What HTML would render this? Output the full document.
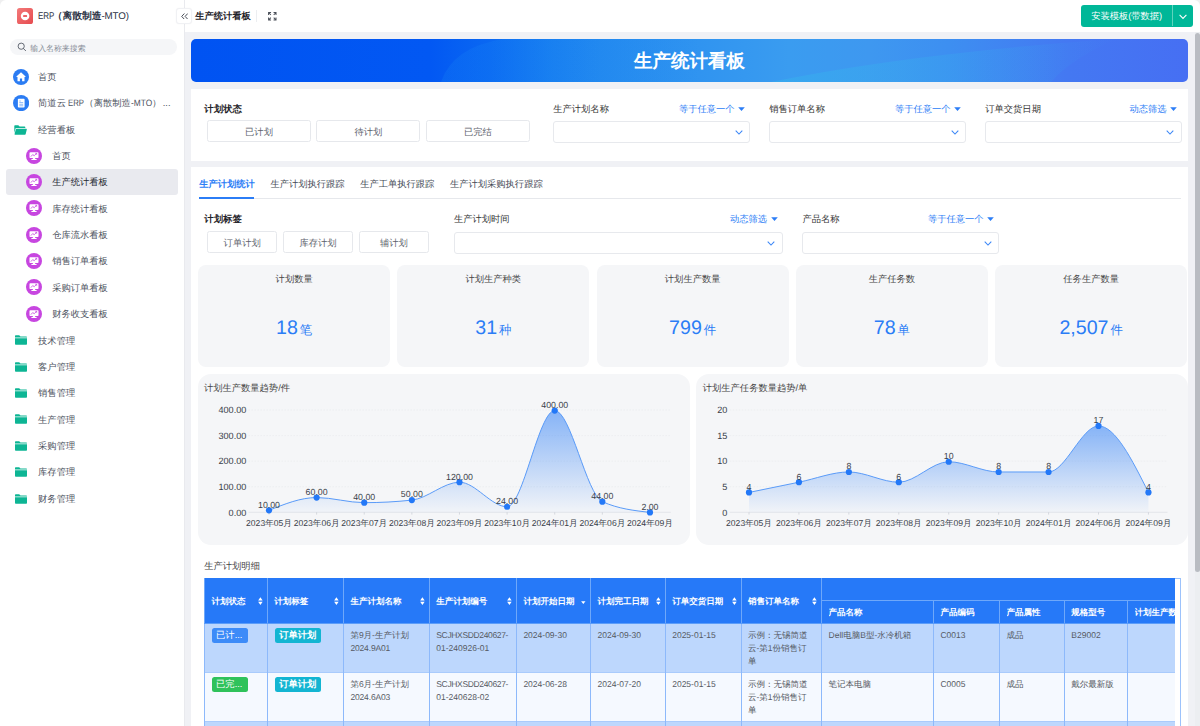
<!DOCTYPE html>
<html lang="zh"><head><meta charset="utf-8"><title>生产统计看板</title><style>
*{box-sizing:border-box;margin:0;padding:0}
html,body{width:1200px;height:726px;overflow:hidden;background:#fff}
body{position:relative;font-family:"Liberation Sans",sans-serif;font-size:9.28px;letter-spacing:0;text-rendering:geometricPrecision;color:#333;-webkit-font-smoothing:antialiased}
.abs{position:absolute}
.t{position:absolute;white-space:nowrap;line-height:12px}
#side{position:absolute;left:0;top:0;width:184px;height:726px;background:#fff;border-right:1px solid #e9eaee;width:185px}
#main{position:absolute;left:185px;top:32px;width:1015px;height:694px;background:#f0f1f5}
.mi{position:absolute;left:0;width:184px;height:26px}
.mi .tx{position:absolute;top:50%;transform:translateY(-50%);font-size:9.3px;color:#4c5260;white-space:nowrap;line-height:12px}
.mi svg{position:absolute}
.sel{position:absolute;left:6px;width:172px;height:25.6px;background:#e9eaef;border-radius:3px}
.panel{position:absolute;background:#fff}
.btn{position:absolute;border:1px solid #e6e8ec;border-radius:2.5px;background:#fff;text-align:center;color:#5c626c;font-size:9.28px}
.selbox{position:absolute;border:1px solid #e7e9ed;border-radius:3px;background:#fff}
.lbl{position:absolute;white-space:nowrap;font-size:9.28px;line-height:12px;color:#333}
.lblb{font-weight:bold;color:#1f2329;font-size:9.4px}
.blue{color:#2b7df6}
.card{position:absolute;background:#f5f6f8;border-radius:8px}
.card .cl{position:absolute;left:0;right:0;top:8.2px;text-align:center;font-size:9.28px;line-height:12px;color:#444}
.card .cv{position:absolute;left:0;right:0;top:49.6px;text-align:center;color:#2b7df6;font-size:19.6px;letter-spacing:0;line-height:26px;white-space:nowrap}
.card .cv span{font-size:12.4px;margin-left:2px}
.nr{letter-spacing:-.35px}
.chart{position:absolute;background:#f5f6f8;border-radius:13px}
</style></head>
<body>
<div id="main"></div>
<div id="side">
<svg class="abs" style="left:17px;top:7.7px" width="16" height="16" viewBox="0 0 16 16"><defs><linearGradient id="lg" x1="0" y1="0" x2="1" y2="1"><stop offset="0" stop-color="#f37a7a"/><stop offset="1" stop-color="#e64b4f"/></linearGradient></defs><rect width="16" height="16" rx="2.6" fill="url(#lg)"/><circle cx="8.1" cy="8" r="4.3" fill="#fff"/><rect x="6.1" y="7.1" width="4" height="1.9" rx="0.6" fill="#ec6466"/></svg>
<div class="t" style="left:38.4px;top:11.4px;font-size:9.75px;letter-spacing:0;color:#2b3245"><span style="display:inline-block;transform:scaleX(.82);transform-origin:0 50%;margin-right:-3.6px">ERP</span><b style="margin-left:-2.2px">（离散制造</b><span style="letter-spacing:-0.1px">-MTO)</span></div>
<div class="abs" style="left:10px;top:39px;width:166.5px;height:15.8px;border-radius:8px;background:#f5f6f8"></div>
<svg class="abs" style="left:17.2px;top:42.3px" width="10" height="10" viewBox="0 0 10 10"><circle cx="4.2" cy="4.2" r="3.1" fill="none" stroke="#555b66" stroke-width="0.9"/><path d="M6.5 6.6 L8.6 8.7" stroke="#555b66" stroke-width="0.9" stroke-linecap="round"/></svg>
<div class="t" style="left:30.3px;top:42.5px;font-size:7.9px;letter-spacing:0;color:#868c97">输入名称来搜索</div>
<svg class="abs" style="left:13px;top:68.5px" width="16" height="16" viewBox="0 0 16 16"><circle cx="8" cy="8" r="8" fill="#2b7cf3"/><path d="M8 3.3 L3.4 7.6 Q3.2 8 3.7 8 H4.5 V11.9 Q4.5 12.3 4.9 12.3 H6.9 V9.5 H9.1 V12.3 H11.1 Q11.5 12.3 11.5 11.9 V8 H12.3 Q12.8 8 12.6 7.6 Z" fill="#fff"/></svg>
<div class="t" style="left:38.1px;top:70.9px;color:#4c5260">首页</div>
<svg class="abs" style="left:12.9px;top:94.76px" width="16.2" height="16.2" viewBox="0 0 16.2 16.2"><circle cx="8.1" cy="8.1" r="8.1" fill="#2b7cf3"/><rect x="4.9" y="3.8" width="6.7" height="8.7" rx="0.8" fill="#fff"/><rect x="6.3" y="5.6" width="1.5" height="0.85" fill="#7fb0f8"/><rect x="6.3" y="7.2" width="3.9" height="0.85" fill="#7fb0f8"/><rect x="6.3" y="8.8" width="3.9" height="0.85" fill="#7fb0f8"/><rect x="6.3" y="10.4" width="3.9" height="0.85" fill="#7fb0f8"/></svg>
<div class="t" style="left:38.1px;top:97.3px;color:#4c5260">简道云 <span style="display:inline-block;transform:scaleX(.84);transform-origin:0 50%;margin-right:-3px">ERP</span>（离散制造<span style="display:inline-block;transform:scaleX(.9);transform-origin:0 50%;margin-right:-2.4px">-MTO</span>）<span style="margin-left:1.5px">...</span></div>
<svg class="abs" style="left:14.399999999999999px;top:124.62px" width="13" height="10" viewBox="0 0 13 10"><path d="M0.3 0.9 Q0.3 0.2 1 0.2 H4.3 L5.6 1.5 H10.6 Q11.3 1.5 11.3 2.2 V3 H2.4 Q1.6 3 1.4 3.8 L0.3 8.2 Z" fill="#0db594"/><path d="M2.6 3.7 H12.3 Q13 3.7 12.8 4.4 L11.7 9.1 Q11.6 9.7 10.9 9.7 H0.9 Q0.4 9.7 0.6 9.1 L1.8 4.3 Q2 3.7 2.6 3.7 Z" fill="#0db594"/></svg>
<div class="t" style="left:38.1px;top:123.6px;color:#4c5260">经营看板</div>
<svg class="abs" style="left:26.200000000000003px;top:147.57999999999998px" width="16" height="16" viewBox="0 0 16 16"><circle cx="8" cy="8" r="8" fill="#c746e0"/><rect x="3.5" y="4.3" width="9" height="5.8" rx="0.8" fill="#fff"/><path d="M7 10 H9 L9.3 11 H10.6 V12 H5.4 V11 H6.7 Z" fill="#fff"/><path d="M4.9 8.6 L6.7 6.6 L8.2 7.7 L10.6 5.4 M9.3 5.3 H10.7 V6.7" stroke="#c746e0" stroke-width="0.8" fill="none"/></svg>
<div class="t" style="left:52.2px;top:150.0px;color:#4c5260">首页</div>
<div class="sel" style="top:169.0px"></div>
<svg class="abs" style="left:26.200000000000003px;top:173.94px" width="16" height="16" viewBox="0 0 16 16"><circle cx="8" cy="8" r="8" fill="#c746e0"/><rect x="3.5" y="4.3" width="9" height="5.8" rx="0.8" fill="#fff"/><path d="M7 10 H9 L9.3 11 H10.6 V12 H5.4 V11 H6.7 Z" fill="#fff"/><path d="M4.9 8.6 L6.7 6.6 L8.2 7.7 L10.6 5.4 M9.3 5.3 H10.7 V6.7" stroke="#c746e0" stroke-width="0.8" fill="none"/></svg>
<div class="t" style="left:52.2px;top:176.3px;color:#23272f">生产统计看板</div>
<svg class="abs" style="left:26.200000000000003px;top:200.3px" width="16" height="16" viewBox="0 0 16 16"><circle cx="8" cy="8" r="8" fill="#c746e0"/><rect x="3.5" y="4.3" width="9" height="5.8" rx="0.8" fill="#fff"/><path d="M7 10 H9 L9.3 11 H10.6 V12 H5.4 V11 H6.7 Z" fill="#fff"/><path d="M4.9 8.6 L6.7 6.6 L8.2 7.7 L10.6 5.4 M9.3 5.3 H10.7 V6.7" stroke="#c746e0" stroke-width="0.8" fill="none"/></svg>
<div class="t" style="left:52.2px;top:202.7px;color:#4c5260">库存统计看板</div>
<svg class="abs" style="left:26.200000000000003px;top:226.66px" width="16" height="16" viewBox="0 0 16 16"><circle cx="8" cy="8" r="8" fill="#c746e0"/><rect x="3.5" y="4.3" width="9" height="5.8" rx="0.8" fill="#fff"/><path d="M7 10 H9 L9.3 11 H10.6 V12 H5.4 V11 H6.7 Z" fill="#fff"/><path d="M4.9 8.6 L6.7 6.6 L8.2 7.7 L10.6 5.4 M9.3 5.3 H10.7 V6.7" stroke="#c746e0" stroke-width="0.8" fill="none"/></svg>
<div class="t" style="left:52.2px;top:229.1px;color:#4c5260">仓库流水看板</div>
<svg class="abs" style="left:26.200000000000003px;top:253.01999999999998px" width="16" height="16" viewBox="0 0 16 16"><circle cx="8" cy="8" r="8" fill="#c746e0"/><rect x="3.5" y="4.3" width="9" height="5.8" rx="0.8" fill="#fff"/><path d="M7 10 H9 L9.3 11 H10.6 V12 H5.4 V11 H6.7 Z" fill="#fff"/><path d="M4.9 8.6 L6.7 6.6 L8.2 7.7 L10.6 5.4 M9.3 5.3 H10.7 V6.7" stroke="#c746e0" stroke-width="0.8" fill="none"/></svg>
<div class="t" style="left:52.2px;top:255.4px;color:#4c5260">销售订单看板</div>
<svg class="abs" style="left:26.200000000000003px;top:279.38px" width="16" height="16" viewBox="0 0 16 16"><circle cx="8" cy="8" r="8" fill="#c746e0"/><rect x="3.5" y="4.3" width="9" height="5.8" rx="0.8" fill="#fff"/><path d="M7 10 H9 L9.3 11 H10.6 V12 H5.4 V11 H6.7 Z" fill="#fff"/><path d="M4.9 8.6 L6.7 6.6 L8.2 7.7 L10.6 5.4 M9.3 5.3 H10.7 V6.7" stroke="#c746e0" stroke-width="0.8" fill="none"/></svg>
<div class="t" style="left:52.2px;top:281.8px;color:#4c5260">采购订单看板</div>
<svg class="abs" style="left:26.200000000000003px;top:305.74px" width="16" height="16" viewBox="0 0 16 16"><circle cx="8" cy="8" r="8" fill="#c746e0"/><rect x="3.5" y="4.3" width="9" height="5.8" rx="0.8" fill="#fff"/><path d="M7 10 H9 L9.3 11 H10.6 V12 H5.4 V11 H6.7 Z" fill="#fff"/><path d="M4.9 8.6 L6.7 6.6 L8.2 7.7 L10.6 5.4 M9.3 5.3 H10.7 V6.7" stroke="#c746e0" stroke-width="0.8" fill="none"/></svg>
<div class="t" style="left:52.2px;top:308.1px;color:#4c5260">财务收支看板</div>
<svg class="abs" style="left:15px;top:335.40000000000003px" width="12" height="10" viewBox="0 0 12 10"><path d="M0 0.9 Q0 0.2 0.7 0.2 H4.2 L5.5 1.5 H11.3 Q12 1.5 12 2.2 V2.6 H0 Z" fill="#0db594"/><path d="M0 3.3 H12 V9 Q12 9.8 11.2 9.8 H0.8 Q0 9.8 0 9 Z" fill="#0db594"/></svg>
<div class="t" style="left:38.1px;top:334.5px;color:#4c5260">技术管理</div>
<svg class="abs" style="left:15px;top:361.76px" width="12" height="10" viewBox="0 0 12 10"><path d="M0 0.9 Q0 0.2 0.7 0.2 H4.2 L5.5 1.5 H11.3 Q12 1.5 12 2.2 V2.6 H0 Z" fill="#0db594"/><path d="M0 3.3 H12 V9 Q12 9.8 11.2 9.8 H0.8 Q0 9.8 0 9 Z" fill="#0db594"/></svg>
<div class="t" style="left:38.1px;top:360.9px;color:#4c5260">客户管理</div>
<svg class="abs" style="left:15px;top:388.12px" width="12" height="10" viewBox="0 0 12 10"><path d="M0 0.9 Q0 0.2 0.7 0.2 H4.2 L5.5 1.5 H11.3 Q12 1.5 12 2.2 V2.6 H0 Z" fill="#0db594"/><path d="M0 3.3 H12 V9 Q12 9.8 11.2 9.8 H0.8 Q0 9.8 0 9 Z" fill="#0db594"/></svg>
<div class="t" style="left:38.1px;top:387.2px;color:#4c5260">销售管理</div>
<svg class="abs" style="left:15px;top:414.48px" width="12" height="10" viewBox="0 0 12 10"><path d="M0 0.9 Q0 0.2 0.7 0.2 H4.2 L5.5 1.5 H11.3 Q12 1.5 12 2.2 V2.6 H0 Z" fill="#0db594"/><path d="M0 3.3 H12 V9 Q12 9.8 11.2 9.8 H0.8 Q0 9.8 0 9 Z" fill="#0db594"/></svg>
<div class="t" style="left:38.1px;top:413.6px;color:#4c5260">生产管理</div>
<svg class="abs" style="left:15px;top:440.84px" width="12" height="10" viewBox="0 0 12 10"><path d="M0 0.9 Q0 0.2 0.7 0.2 H4.2 L5.5 1.5 H11.3 Q12 1.5 12 2.2 V2.6 H0 Z" fill="#0db594"/><path d="M0 3.3 H12 V9 Q12 9.8 11.2 9.8 H0.8 Q0 9.8 0 9 Z" fill="#0db594"/></svg>
<div class="t" style="left:38.1px;top:439.9px;color:#4c5260">采购管理</div>
<svg class="abs" style="left:15px;top:467.2px" width="12" height="10" viewBox="0 0 12 10"><path d="M0 0.9 Q0 0.2 0.7 0.2 H4.2 L5.5 1.5 H11.3 Q12 1.5 12 2.2 V2.6 H0 Z" fill="#0db594"/><path d="M0 3.3 H12 V9 Q12 9.8 11.2 9.8 H0.8 Q0 9.8 0 9 Z" fill="#0db594"/></svg>
<div class="t" style="left:38.1px;top:466.3px;color:#4c5260">库存管理</div>
<svg class="abs" style="left:15px;top:493.56px" width="12" height="10" viewBox="0 0 12 10"><path d="M0 0.9 Q0 0.2 0.7 0.2 H4.2 L5.5 1.5 H11.3 Q12 1.5 12 2.2 V2.6 H0 Z" fill="#0db594"/><path d="M0 3.3 H12 V9 Q12 9.8 11.2 9.8 H0.8 Q0 9.8 0 9 Z" fill="#0db594"/></svg>
<div class="t" style="left:38.1px;top:492.7px;color:#4c5260">财务管理</div>
</div>
<div class="abs" style="left:0;top:0;width:6px;height:6px;background:#efeff0"><div style="width:6px;height:6px;background:#fff;border-top-left-radius:6px"></div></div>
<div class="abs" style="left:1194px;top:0;width:6px;height:6px;background:#efeff0"><div style="width:6px;height:6px;background:#fff;border-top-right-radius:6px"></div></div>
<div class="abs" style="left:176px;top:7.8px;width:15.6px;height:15.8px;background:#fff;border:1px solid #f0f1f4;border-radius:3px;box-shadow:0 0 1.5px rgba(0,0,0,.05)"></div>
<svg class="abs" style="left:180.6px;top:12.6px" width="7.4" height="6.8" viewBox="0 0 7.4 6.8"><path d="M3.4 0.5 L0.7 3.4 L3.4 6.3 M6.8 0.5 L4.1 3.4 L6.8 6.3" fill="none" stroke="#3f444e" stroke-width="0.95"/></svg>
<div class="t" style="left:195.2px;top:10.3px;font-weight:bold;color:#1f2329">生产统计看板</div>
<div class="abs" style="left:256px;top:9.5px;width:1px;height:12.5px;background:#eceef1"></div>
<svg class="abs" style="left:268px;top:12px" width="8.6" height="8.6" viewBox="0 0 9 9"><g fill="none" stroke="#4a4f59" stroke-width="1.05"><path d="M0.6 3.2 V0.6 H3.2 M0.8 0.8 L3 3"/><path d="M5.8 0.6 H8.4 V3.2 M8.2 0.8 L6 3"/><path d="M0.6 5.8 V8.4 H3.2 M0.8 8.2 L3 6"/><path d="M5.8 8.4 H8.4 V5.8 M8.2 8.2 L6 6"/></g></svg>
<div class="abs" style="left:1080.7px;top:5.4px;width:112.7px;height:21.2px;background:#00b798;border-radius:3px"></div>
<div class="abs" style="left:1172.4px;top:5.2px;width:0.8px;height:21.3px;background:#5fd3bd"></div>
<div class="t" style="left:1080.7px;top:10.4px;width:92px;text-align:center;color:#fff">安装模板(带数据)</div>
<svg class="abs" style="left:1178.9px;top:13.9px" width="8" height="6" viewBox="0 0 8 6"><path d="M0.6 0.9 L4 4.5 L7.4 0.9" fill="none" stroke="#fff" stroke-width="1.1"/></svg>
<div class="abs" style="left:1195px;top:32px;width:5px;height:694px;background:#eceef1"></div>
<div class="abs" style="left:1195px;top:32.5px;width:5px;height:539px;background:#b9bcc2;border-radius:2.5px"></div>
<div class="abs" style="left:191px;top:39px;width:997px;height:43px;border-radius:5px;overflow:hidden;background:linear-gradient(90deg,#0053f2 0%,#0258f3 24%,#0a68f2 30%,#187ef0 36%,#2389ef 41%,#3094f0 51%,#3a9cf0 60%,#3e98f0 68%,#3d8ff1 76%,#4478f2 88%,#466ff3 100%)">
<svg width="997" height="43" viewBox="0 0 997 43" style="position:absolute;left:0;top:0"><defs><linearGradient id="bw" x1="0" y1="0" x2="1" y2="0"><stop offset="0" stop-color="#37b0ee" stop-opacity="0.55"/><stop offset="1" stop-color="#37b0ee" stop-opacity="0"/></linearGradient><linearGradient id="bw2" x1="0" y1="0" x2="1" y2="0"><stop offset="0" stop-color="#1a8af5" stop-opacity="0.22"/><stop offset="1" stop-color="#1a8af5" stop-opacity="0"/></linearGradient></defs>
<path d="M250 43 Q262 8 312 0 H520 V43 Z" fill="url(#bw2)"/>
<path d="M580 43 Q720 14 925 0 Q880 20 860 43 Z" fill="url(#bw)"/></svg>
<div style="position:absolute;left:0;right:0;top:10.5px;text-align:center;color:#fff;font-weight:bold;font-size:18.5px;line-height:22px">生产统计看板</div></div>
<div class="panel" style="left:191px;top:89px;width:997px;height:71.8px"></div>
<div class="lbl lblb" style="left:204.3px;top:103px">计划状态</div>
<div class="btn" style="left:207.0px;top:120.3px;width:104px;height:21.4px;line-height:22.2px">已计划</div>
<div class="btn" style="left:316.4px;top:120.3px;width:104px;height:21.4px;line-height:22.2px">待计划</div>
<div class="btn" style="left:425.8px;top:120.3px;width:104px;height:21.4px;line-height:22.2px">已完结</div>
<div class="lbl " style="left:553.3px;top:103px">生产计划名称</div>
<div class="lbl blue" style="right:465.5px;top:103px">等于任意一个</div>
<svg class="abs" style="left:738px;top:107.2px" width="7" height="4.2" viewBox="0 0 7 4.2"><path d="M0.2 0.2 H6.8 L3.5 4 Z" fill="#2b7df6"/></svg>
<div class="selbox" style="left:553px;top:121px;width:197px;height:22px"></div><svg class="abs" style="left:734.7px;top:129.7px" width="8" height="5" viewBox="0 0 8 5"><path d="M0.7 0.7 L4 4 L7.3 0.7" fill="none" stroke="#3a86f7" stroke-width="1.05"/></svg>
<div class="lbl " style="left:769.3px;top:103px">销售订单名称</div>
<div class="lbl blue" style="right:249.5px;top:103px">等于任意一个</div>
<svg class="abs" style="left:954px;top:107.2px" width="7" height="4.2" viewBox="0 0 7 4.2"><path d="M0.2 0.2 H6.8 L3.5 4 Z" fill="#2b7df6"/></svg>
<div class="selbox" style="left:769px;top:121px;width:197px;height:22px"></div><svg class="abs" style="left:950.7px;top:129.7px" width="8" height="5" viewBox="0 0 8 5"><path d="M0.7 0.7 L4 4 L7.3 0.7" fill="none" stroke="#3a86f7" stroke-width="1.05"/></svg>
<div class="lbl " style="left:985.3px;top:103px">订单交货日期</div>
<div class="lbl blue" style="right:33.5px;top:103px">动态筛选</div>
<svg class="abs" style="left:1170px;top:107.2px" width="7" height="4.2" viewBox="0 0 7 4.2"><path d="M0.2 0.2 H6.8 L3.5 4 Z" fill="#2b7df6"/></svg>
<div class="selbox" style="left:985px;top:121px;width:196.5px;height:22px"></div><svg class="abs" style="left:1166.2px;top:129.7px" width="8" height="5" viewBox="0 0 8 5"><path d="M0.7 0.7 L4 4 L7.3 0.7" fill="none" stroke="#3a86f7" stroke-width="1.05"/></svg>
<div class="panel" style="left:191px;top:167.4px;width:997px;height:560px"></div>
<div class="abs" style="left:199px;top:197.8px;width:981.5px;height:1px;background:#e6e8ec"></div>
<div class="abs" style="left:199px;top:196.8px;width:55.4px;height:2px;background:#2b7df6"></div>
<div class="lbl blue" style="left:199.2px;top:177.7px;font-weight:bold">生产计划统计</div>
<div class="lbl" style="left:270.4px;top:177.7px;color:#444a55">生产计划执行跟踪</div>
<div class="lbl" style="left:360.2px;top:177.7px;color:#444a55">生产工单执行跟踪</div>
<div class="lbl" style="left:450px;top:177.7px;color:#444a55">生产计划采购执行跟踪</div>
<div class="lbl lblb" style="left:204.3px;top:213.05px">计划标签</div>
<div class="btn" style="left:207.0px;top:231.2px;width:70.3px;height:21.6px;line-height:22.400000000000002px">订单计划</div>
<div class="btn" style="left:282.9px;top:231.2px;width:70.3px;height:21.6px;line-height:22.400000000000002px">库存计划</div>
<div class="btn" style="left:358.8px;top:231.2px;width:70.3px;height:21.6px;line-height:22.400000000000002px">辅计划</div>
<div class="lbl " style="left:454px;top:213.05px">生产计划时间</div>
<div class="lbl blue" style="right:433px;top:213.05px">动态筛选</div>
<svg class="abs" style="left:770.5px;top:217.3px" width="7" height="4.2" viewBox="0 0 7 4.2"><path d="M0.2 0.2 H6.8 L3.5 4 Z" fill="#2b7df6"/></svg>
<div class="selbox" style="left:453.7px;top:232px;width:329px;height:21.6px"></div><svg class="abs" style="left:767.4000000000001px;top:240.5px" width="8" height="5" viewBox="0 0 8 5"><path d="M0.7 0.7 L4 4 L7.3 0.7" fill="none" stroke="#3a86f7" stroke-width="1.05"/></svg>
<div class="lbl " style="left:802.5px;top:213.05px">产品名称</div>
<div class="lbl blue" style="right:216.5px;top:213.05px">等于任意一个</div>
<svg class="abs" style="left:987px;top:217.3px" width="7" height="4.2" viewBox="0 0 7 4.2"><path d="M0.2 0.2 H6.8 L3.5 4 Z" fill="#2b7df6"/></svg>
<div class="selbox" style="left:802.2px;top:232px;width:197px;height:21.6px"></div><svg class="abs" style="left:983.9000000000001px;top:240.5px" width="8" height="5" viewBox="0 0 8 5"><path d="M0.7 0.7 L4 4 L7.3 0.7" fill="none" stroke="#3a86f7" stroke-width="1.05"/></svg>
<div class="card" style="left:198px;top:265px;width:192.3px;height:101.8px"><div class="cl">计划数量</div><div class="cv">18<span>笔</span></div></div>
<div class="card" style="left:397.2px;top:265px;width:192.3px;height:101.8px"><div class="cl">计划生产种类</div><div class="cv">31<span>种</span></div></div>
<div class="card" style="left:596.5px;top:265px;width:192.3px;height:101.8px"><div class="cl">计划生产数量</div><div class="cv">799<span>件</span></div></div>
<div class="card" style="left:795.7px;top:265px;width:192.3px;height:101.8px"><div class="cl">生产任务数</div><div class="cv">78<span>单</span></div></div>
<div class="card" style="left:995px;top:265px;width:192.3px;height:101.8px"><div class="cl">任务生产数量</div><div class="cv">2,507<span>件</span></div></div>
<div class="chart" style="left:198px;top:373.5px;width:491.5px;height:171.2px"></div>
<div class="lbl" style="left:204px;top:381.7px;color:#444">计划生产数量趋势/件</div>
<svg class="abs" style="left:0;top:0;overflow:visible" width="1200" height="726" viewBox="0 0 1200 726" font-family="Liberation Sans, sans-serif" letter-spacing="0" text-rendering="geometricPrecision">
<defs><linearGradient id="ga" gradientUnits="userSpaceOnUse" x1="0" y1="410.6" x2="0" y2="512.3"><stop offset="0" stop-color="#2b7df6" stop-opacity="0.55"/><stop offset="1" stop-color="#2b7df6" stop-opacity="0.02"/></linearGradient></defs>
<line x1="248.5" x2="670.8" y1="512.3" y2="512.3" stroke="#dfe1e6" stroke-width="0.8"/>
<text x="246.3" y="515.50" text-anchor="end" font-size="9.1" fill="#3a3f4a">0.00</text>
<line x1="248.5" x2="670.8" y1="486.72" y2="486.72" stroke="#e9ebee" stroke-width="0.7" stroke-dasharray="1.5 1.5"/>
<text x="246.3" y="489.92" text-anchor="end" font-size="9.1" fill="#3a3f4a">100.00</text>
<line x1="248.5" x2="670.8" y1="461.15" y2="461.15" stroke="#e9ebee" stroke-width="0.7" stroke-dasharray="1.5 1.5"/>
<text x="246.3" y="464.35" text-anchor="end" font-size="9.1" fill="#3a3f4a">200.00</text>
<line x1="248.5" x2="670.8" y1="435.57" y2="435.57" stroke="#e9ebee" stroke-width="0.7" stroke-dasharray="1.5 1.5"/>
<text x="246.3" y="438.77" text-anchor="end" font-size="9.1" fill="#3a3f4a">300.00</text>
<line x1="248.5" x2="670.8" y1="410.00" y2="410.00" stroke="#e9ebee" stroke-width="0.7" stroke-dasharray="1.5 1.5"/>
<text x="246.3" y="413.20" text-anchor="end" font-size="9.1" fill="#3a3f4a">400.00</text>
<line x1="269.00" x2="269.00" y1="512.3" y2="514.5999999999999" stroke="#c9ccd3" stroke-width="0.7"/>
<text x="269.00" y="525.60" text-anchor="middle" font-size="8.6" fill="#3a3f4a">2023年05月</text>
<line x1="316.62" x2="316.62" y1="512.3" y2="514.5999999999999" stroke="#c9ccd3" stroke-width="0.7"/>
<text x="316.62" y="525.60" text-anchor="middle" font-size="8.6" fill="#3a3f4a">2023年06月</text>
<line x1="364.24" x2="364.24" y1="512.3" y2="514.5999999999999" stroke="#c9ccd3" stroke-width="0.7"/>
<text x="364.24" y="525.60" text-anchor="middle" font-size="8.6" fill="#3a3f4a">2023年07月</text>
<line x1="411.86" x2="411.86" y1="512.3" y2="514.5999999999999" stroke="#c9ccd3" stroke-width="0.7"/>
<text x="411.86" y="525.60" text-anchor="middle" font-size="8.6" fill="#3a3f4a">2023年08月</text>
<line x1="459.48" x2="459.48" y1="512.3" y2="514.5999999999999" stroke="#c9ccd3" stroke-width="0.7"/>
<text x="459.48" y="525.60" text-anchor="middle" font-size="8.6" fill="#3a3f4a">2023年09月</text>
<line x1="507.10" x2="507.10" y1="512.3" y2="514.5999999999999" stroke="#c9ccd3" stroke-width="0.7"/>
<text x="507.10" y="525.60" text-anchor="middle" font-size="8.6" fill="#3a3f4a">2023年10月</text>
<line x1="554.72" x2="554.72" y1="512.3" y2="514.5999999999999" stroke="#c9ccd3" stroke-width="0.7"/>
<text x="554.72" y="525.60" text-anchor="middle" font-size="8.6" fill="#3a3f4a">2024年01月</text>
<line x1="602.34" x2="602.34" y1="512.3" y2="514.5999999999999" stroke="#c9ccd3" stroke-width="0.7"/>
<text x="602.34" y="525.60" text-anchor="middle" font-size="8.6" fill="#3a3f4a">2024年06月</text>
<line x1="649.96" x2="649.96" y1="512.3" y2="514.5999999999999" stroke="#c9ccd3" stroke-width="0.7"/>
<text x="649.96" y="525.60" text-anchor="middle" font-size="8.6" fill="#3a3f4a">2024年09月</text>
<path d="M269.00 510.34 C284.87 503.95 300.75 497.56 316.62 497.56 C332.49 497.56 348.37 502.67 364.24 502.67 C380.11 502.67 395.99 501.82 411.86 500.11 C427.73 498.41 443.61 482.21 459.48 482.21 C475.35 482.21 491.23 506.76 507.10 506.76 C522.97 506.76 538.85 410.60 554.72 410.60 C570.59 410.60 586.47 494.49 602.34 501.65 C618.21 508.81 634.09 510.60 649.96 512.39 L649.96 512.5999999999999 L269.00 512.5999999999999 Z" fill="url(#ga)"/>
<path d="M269.00 510.34 C284.87 503.95 300.75 497.56 316.62 497.56 C332.49 497.56 348.37 502.67 364.24 502.67 C380.11 502.67 395.99 501.82 411.86 500.11 C427.73 498.41 443.61 482.21 459.48 482.21 C475.35 482.21 491.23 506.76 507.10 506.76 C522.97 506.76 538.85 410.60 554.72 410.60 C570.59 410.60 586.47 494.49 602.34 501.65 C618.21 508.81 634.09 510.60 649.96 512.39" fill="none" stroke="#5a9bf8" stroke-width="1"/>
<circle cx="269.00" cy="510.34" r="3.1" fill="#2378f7"/>
<circle cx="316.62" cy="497.56" r="3.1" fill="#2378f7"/>
<circle cx="364.24" cy="502.67" r="3.1" fill="#2378f7"/>
<circle cx="411.86" cy="500.11" r="3.1" fill="#2378f7"/>
<circle cx="459.48" cy="482.21" r="3.1" fill="#2378f7"/>
<circle cx="507.10" cy="506.76" r="3.1" fill="#2378f7"/>
<circle cx="554.72" cy="410.60" r="3.1" fill="#2378f7"/>
<circle cx="602.34" cy="501.65" r="3.1" fill="#2378f7"/>
<circle cx="649.96" cy="512.39" r="3.1" fill="#2378f7"/>
<text x="269.00" y="507.64" text-anchor="middle" font-size="8.8" fill="#3a3f4a">10.00</text>
<text x="316.62" y="494.86" text-anchor="middle" font-size="8.8" fill="#3a3f4a">60.00</text>
<text x="364.24" y="499.97" text-anchor="middle" font-size="8.8" fill="#3a3f4a">40.00</text>
<text x="411.86" y="497.41" text-anchor="middle" font-size="8.8" fill="#3a3f4a">50.00</text>
<text x="459.48" y="479.51" text-anchor="middle" font-size="8.8" fill="#3a3f4a">120.00</text>
<text x="507.10" y="504.06" text-anchor="middle" font-size="8.8" fill="#3a3f4a">24.00</text>
<text x="554.72" y="407.90" text-anchor="middle" font-size="8.8" fill="#3a3f4a">400.00</text>
<text x="602.34" y="498.95" text-anchor="middle" font-size="8.8" fill="#3a3f4a">44.00</text>
<text x="649.96" y="509.69" text-anchor="middle" font-size="8.8" fill="#3a3f4a">2.00</text>
</svg>
<div class="chart" style="left:696.2px;top:373.5px;width:491.5px;height:171.2px"></div>
<div class="lbl" style="left:702.8px;top:381.7px;color:#444">计划生产任务数量趋势/单</div>
<svg class="abs" style="left:0;top:0;overflow:visible" width="1200" height="726" viewBox="0 0 1200 726" font-family="Liberation Sans, sans-serif" letter-spacing="0" text-rendering="geometricPrecision">
<defs><linearGradient id="gb" gradientUnits="userSpaceOnUse" x1="0" y1="425.9" x2="0" y2="512.3"><stop offset="0" stop-color="#2b7df6" stop-opacity="0.55"/><stop offset="1" stop-color="#2b7df6" stop-opacity="0.02"/></linearGradient></defs>
<line x1="729.7" x2="1167.5" y1="512.3" y2="512.3" stroke="#dfe1e6" stroke-width="0.8"/>
<text x="727.3" y="515.50" text-anchor="end" font-size="9.1" fill="#3a3f4a">0</text>
<line x1="729.7" x2="1167.5" y1="486.72" y2="486.72" stroke="#e9ebee" stroke-width="0.7" stroke-dasharray="1.5 1.5"/>
<text x="727.3" y="489.92" text-anchor="end" font-size="9.1" fill="#3a3f4a">5</text>
<line x1="729.7" x2="1167.5" y1="461.15" y2="461.15" stroke="#e9ebee" stroke-width="0.7" stroke-dasharray="1.5 1.5"/>
<text x="727.3" y="464.35" text-anchor="end" font-size="9.1" fill="#3a3f4a">10</text>
<line x1="729.7" x2="1167.5" y1="435.57" y2="435.57" stroke="#e9ebee" stroke-width="0.7" stroke-dasharray="1.5 1.5"/>
<text x="727.3" y="438.77" text-anchor="end" font-size="9.1" fill="#3a3f4a">15</text>
<line x1="729.7" x2="1167.5" y1="410.00" y2="410.00" stroke="#e9ebee" stroke-width="0.7" stroke-dasharray="1.5 1.5"/>
<text x="727.3" y="413.20" text-anchor="end" font-size="9.1" fill="#3a3f4a">20</text>
<line x1="749.00" x2="749.00" y1="512.3" y2="514.5999999999999" stroke="#c9ccd3" stroke-width="0.7"/>
<text x="749.00" y="525.60" text-anchor="middle" font-size="8.6" fill="#3a3f4a">2023年05月</text>
<line x1="798.93" x2="798.93" y1="512.3" y2="514.5999999999999" stroke="#c9ccd3" stroke-width="0.7"/>
<text x="798.93" y="525.60" text-anchor="middle" font-size="8.6" fill="#3a3f4a">2023年06月</text>
<line x1="848.86" x2="848.86" y1="512.3" y2="514.5999999999999" stroke="#c9ccd3" stroke-width="0.7"/>
<text x="848.86" y="525.60" text-anchor="middle" font-size="8.6" fill="#3a3f4a">2023年07月</text>
<line x1="898.79" x2="898.79" y1="512.3" y2="514.5999999999999" stroke="#c9ccd3" stroke-width="0.7"/>
<text x="898.79" y="525.60" text-anchor="middle" font-size="8.6" fill="#3a3f4a">2023年08月</text>
<line x1="948.72" x2="948.72" y1="512.3" y2="514.5999999999999" stroke="#c9ccd3" stroke-width="0.7"/>
<text x="948.72" y="525.60" text-anchor="middle" font-size="8.6" fill="#3a3f4a">2023年09月</text>
<line x1="998.65" x2="998.65" y1="512.3" y2="514.5999999999999" stroke="#c9ccd3" stroke-width="0.7"/>
<text x="998.65" y="525.60" text-anchor="middle" font-size="8.6" fill="#3a3f4a">2023年10月</text>
<line x1="1048.58" x2="1048.58" y1="512.3" y2="514.5999999999999" stroke="#c9ccd3" stroke-width="0.7"/>
<text x="1048.58" y="525.60" text-anchor="middle" font-size="8.6" fill="#3a3f4a">2024年01月</text>
<line x1="1098.51" x2="1098.51" y1="512.3" y2="514.5999999999999" stroke="#c9ccd3" stroke-width="0.7"/>
<text x="1098.51" y="525.60" text-anchor="middle" font-size="8.6" fill="#3a3f4a">2024年06月</text>
<line x1="1148.44" x2="1148.44" y1="512.3" y2="514.5999999999999" stroke="#c9ccd3" stroke-width="0.7"/>
<text x="1148.44" y="525.60" text-anchor="middle" font-size="8.6" fill="#3a3f4a">2024年09月</text>
<path d="M749.00 492.44 C765.64 489.03 782.29 485.62 798.93 482.21 C815.57 478.80 832.22 471.98 848.86 471.98 C865.50 471.98 882.15 482.21 898.79 482.21 C915.43 482.21 932.08 461.75 948.72 461.75 C965.36 461.75 982.01 471.98 998.65 471.98 C1015.29 471.98 1031.94 471.98 1048.58 471.98 C1065.22 471.98 1081.87 425.95 1098.51 425.95 C1115.15 425.95 1131.80 459.19 1148.44 492.44 L1148.44 512.5999999999999 L749.00 512.5999999999999 Z" fill="url(#gb)"/>
<path d="M749.00 492.44 C765.64 489.03 782.29 485.62 798.93 482.21 C815.57 478.80 832.22 471.98 848.86 471.98 C865.50 471.98 882.15 482.21 898.79 482.21 C915.43 482.21 932.08 461.75 948.72 461.75 C965.36 461.75 982.01 471.98 998.65 471.98 C1015.29 471.98 1031.94 471.98 1048.58 471.98 C1065.22 471.98 1081.87 425.95 1098.51 425.95 C1115.15 425.95 1131.80 459.19 1148.44 492.44" fill="none" stroke="#5a9bf8" stroke-width="1"/>
<circle cx="749.00" cy="492.44" r="3.1" fill="#2378f7"/>
<circle cx="798.93" cy="482.21" r="3.1" fill="#2378f7"/>
<circle cx="848.86" cy="471.98" r="3.1" fill="#2378f7"/>
<circle cx="898.79" cy="482.21" r="3.1" fill="#2378f7"/>
<circle cx="948.72" cy="461.75" r="3.1" fill="#2378f7"/>
<circle cx="998.65" cy="471.98" r="3.1" fill="#2378f7"/>
<circle cx="1048.58" cy="471.98" r="3.1" fill="#2378f7"/>
<circle cx="1098.51" cy="425.95" r="3.1" fill="#2378f7"/>
<circle cx="1148.44" cy="492.44" r="3.1" fill="#2378f7"/>
<text x="749.00" y="489.74" text-anchor="middle" font-size="8.8" fill="#3a3f4a">4</text>
<text x="798.93" y="479.51" text-anchor="middle" font-size="8.8" fill="#3a3f4a">6</text>
<text x="848.86" y="469.28" text-anchor="middle" font-size="8.8" fill="#3a3f4a">8</text>
<text x="898.79" y="479.51" text-anchor="middle" font-size="8.8" fill="#3a3f4a">6</text>
<text x="948.72" y="459.05" text-anchor="middle" font-size="8.8" fill="#3a3f4a">10</text>
<text x="998.65" y="469.28" text-anchor="middle" font-size="8.8" fill="#3a3f4a">8</text>
<text x="1048.58" y="469.28" text-anchor="middle" font-size="8.8" fill="#3a3f4a">8</text>
<text x="1098.51" y="423.25" text-anchor="middle" font-size="8.8" fill="#3a3f4a">17</text>
<text x="1148.44" y="489.74" text-anchor="middle" font-size="8.8" fill="#3a3f4a">4</text>
</svg>
<div class="lbl" style="left:204.3px;top:559.6px;color:#444">生产计划明细</div>
<div class="abs" style="left:204px;top:577.6px;width:977.3px;height:160px;border:1px solid #9cc2fb;border-bottom:none;border-left:none;background:#fff"></div>
<div class="abs" style="left:204.4px;top:578.1px;width:970.8000000000001px;height:45.19999999999993px;background:#2679f8"></div>
<div class="abs" style="left:204.4px;top:623.3px;width:970.8000000000001px;height:49.2px;background:#bdd7fd"></div>
<div class="abs" style="left:204.4px;top:672.5px;width:970.8000000000001px;height:49.2px;background:#f5f9ff"></div>
<div class="abs" style="left:204.4px;top:672.1px;width:970.8000000000001px;height:0.8px;background:#a9cbfc"></div>
<div class="abs" style="left:204.4px;top:721.6999999999999px;width:970.8000000000001px;height:49.2px;background:#bdd7fd"></div>
<div class="abs" style="left:204.4px;top:721.3px;width:970.8000000000001px;height:0.8px;background:#a9cbfc"></div>
<div class="abs" style="left:203.9px;top:578.1px;width:1px;height:45.19999999999993px;background:#6ea8fa"></div>
<div class="abs" style="left:203.9px;top:623.3px;width:1px;height:110px;background:#8db9fb"></div>
<div class="abs" style="left:266.8px;top:578.1px;width:1px;height:45.19999999999993px;background:#6ea8fa"></div>
<div class="abs" style="left:266.8px;top:623.3px;width:1px;height:110px;background:#8db9fb"></div>
<div class="abs" style="left:342.9px;top:578.1px;width:1px;height:45.19999999999993px;background:#6ea8fa"></div>
<div class="abs" style="left:342.9px;top:623.3px;width:1px;height:110px;background:#8db9fb"></div>
<div class="abs" style="left:428.8px;top:578.1px;width:1px;height:45.19999999999993px;background:#6ea8fa"></div>
<div class="abs" style="left:428.8px;top:623.3px;width:1px;height:110px;background:#8db9fb"></div>
<div class="abs" style="left:515.9px;top:578.1px;width:1px;height:45.19999999999993px;background:#6ea8fa"></div>
<div class="abs" style="left:515.9px;top:623.3px;width:1px;height:110px;background:#8db9fb"></div>
<div class="abs" style="left:590.0px;top:578.1px;width:1px;height:45.19999999999993px;background:#6ea8fa"></div>
<div class="abs" style="left:590.0px;top:623.3px;width:1px;height:110px;background:#8db9fb"></div>
<div class="abs" style="left:664.7px;top:578.1px;width:1px;height:45.19999999999993px;background:#6ea8fa"></div>
<div class="abs" style="left:664.7px;top:623.3px;width:1px;height:110px;background:#8db9fb"></div>
<div class="abs" style="left:740.5px;top:578.1px;width:1px;height:45.19999999999993px;background:#6ea8fa"></div>
<div class="abs" style="left:740.5px;top:623.3px;width:1px;height:110px;background:#8db9fb"></div>
<div class="abs" style="left:821.1px;top:578.1px;width:1px;height:45.19999999999993px;background:#6ea8fa"></div>
<div class="abs" style="left:821.1px;top:623.3px;width:1px;height:110px;background:#8db9fb"></div>
<div class="abs" style="left:932.9px;top:600.6px;width:1px;height:22.699999999999932px;background:#6ea8fa"></div>
<div class="abs" style="left:932.9px;top:623.3px;width:1px;height:110px;background:#8db9fb"></div>
<div class="abs" style="left:999.0px;top:600.6px;width:1px;height:22.699999999999932px;background:#6ea8fa"></div>
<div class="abs" style="left:999.0px;top:623.3px;width:1px;height:110px;background:#8db9fb"></div>
<div class="abs" style="left:1063.8px;top:600.6px;width:1px;height:22.699999999999932px;background:#6ea8fa"></div>
<div class="abs" style="left:1063.8px;top:623.3px;width:1px;height:110px;background:#8db9fb"></div>
<div class="abs" style="left:1127.1px;top:600.6px;width:1px;height:22.699999999999932px;background:#6ea8fa"></div>
<div class="abs" style="left:1127.1px;top:623.3px;width:1px;height:110px;background:#8db9fb"></div>
<div class="abs" style="left:821.6px;top:600.1px;width:353.6px;height:1px;background:#6ea8fa"></div>
<div class="abs" style="left:204.4px;top:622.8px;width:970.8000000000001px;height:1px;background:#5c9df9"></div>
<div class="t" style="left:211.4px;top:594.9px;color:#fff;font-weight:bold;font-size:8.5px">计划状态</div>
<svg class="abs" style="left:258.1px;top:597.3px" width="4.8" height="8.2" viewBox="0 0 4.4 7.6"><path d="M2.2 0.2 L4.3 3.2 H0.1 Z M2.2 7.4 L4.3 4.4 H0.1 Z" fill="#fff"/></svg>
<div class="t" style="left:274.3px;top:594.9px;color:#fff;font-weight:bold;font-size:8.5px">计划标签</div>
<svg class="abs" style="left:334.2px;top:597.3px" width="4.8" height="8.2" viewBox="0 0 4.4 7.6"><path d="M2.2 0.2 L4.3 3.2 H0.1 Z M2.2 7.4 L4.3 4.4 H0.1 Z" fill="#fff"/></svg>
<div class="t" style="left:350.4px;top:594.9px;color:#fff;font-weight:bold;font-size:8.5px">生产计划名称</div>
<svg class="abs" style="left:420.1px;top:597.3px" width="4.8" height="8.2" viewBox="0 0 4.4 7.6"><path d="M2.2 0.2 L4.3 3.2 H0.1 Z M2.2 7.4 L4.3 4.4 H0.1 Z" fill="#fff"/></svg>
<div class="t" style="left:436.3px;top:594.9px;color:#fff;font-weight:bold;font-size:8.5px">生产计划编号</div>
<svg class="abs" style="left:507.2px;top:597.3px" width="4.8" height="8.2" viewBox="0 0 4.4 7.6"><path d="M2.2 0.2 L4.3 3.2 H0.1 Z M2.2 7.4 L4.3 4.4 H0.1 Z" fill="#fff"/></svg>
<div class="t" style="left:523.4px;top:594.9px;color:#fff;font-weight:bold;font-size:8.5px">计划开始日期</div>
<svg class="abs" style="left:581.4000000000001px;top:600.8px" width="4.6" height="3" viewBox="0 0 4.6 3"><path d="M0.1 0.2 H4.5 L2.3 2.9 Z" fill="#fff"/></svg>
<div class="t" style="left:597.5px;top:594.9px;color:#fff;font-weight:bold;font-size:8.5px">计划完工日期</div>
<svg class="abs" style="left:656.0000000000001px;top:597.3px" width="4.8" height="8.2" viewBox="0 0 4.4 7.6"><path d="M2.2 0.2 L4.3 3.2 H0.1 Z M2.2 7.4 L4.3 4.4 H0.1 Z" fill="#fff"/></svg>
<div class="t" style="left:672.2px;top:594.9px;color:#fff;font-weight:bold;font-size:8.5px">订单交货日期</div>
<svg class="abs" style="left:731.8000000000001px;top:597.3px" width="4.8" height="8.2" viewBox="0 0 4.4 7.6"><path d="M2.2 0.2 L4.3 3.2 H0.1 Z M2.2 7.4 L4.3 4.4 H0.1 Z" fill="#fff"/></svg>
<div class="t" style="left:748px;top:594.9px;color:#fff;font-weight:bold;font-size:8.5px">销售订单名称</div>
<svg class="abs" style="left:812.4000000000001px;top:597.3px" width="4.8" height="8.2" viewBox="0 0 4.4 7.6"><path d="M2.2 0.2 L4.3 3.2 H0.1 Z M2.2 7.4 L4.3 4.4 H0.1 Z" fill="#fff"/></svg>
<div class="t" style="left:828.6px;top:605.9px;color:#fff;font-weight:bold;font-size:8.5px;width:104.79999999999995px;overflow:hidden">产品名称</div>
<div class="t" style="left:940.4px;top:605.9px;color:#fff;font-weight:bold;font-size:8.5px;width:59.10000000000002px;overflow:hidden">产品编码</div>
<div class="t" style="left:1006.5px;top:605.9px;color:#fff;font-weight:bold;font-size:8.5px;width:57.799999999999955px;overflow:hidden">产品属性</div>
<div class="t" style="left:1071.3px;top:605.9px;color:#fff;font-weight:bold;font-size:8.5px;width:56.299999999999955px;overflow:hidden">规格型号</div>
<div class="t" style="left:1134.6px;top:605.9px;color:#fff;font-weight:bold;font-size:8.5px;width:40.600000000000136px;overflow:hidden">计划生产数量</div>
<div class="abs" style="left:211.5px;top:628.0px;width:36.3px;height:14.8px;border-radius:2.5px;background:#3d8bf8;color:#fff;font-size:9.28px;line-height:14.8px;padding-left:4.6px;white-space:nowrap">已计...</div>
<div class="abs" style="left:274.6px;top:628.0px;width:46.4px;height:14.8px;border-radius:2.5px;background:#13b5d2;color:#fff;font-weight:bold;font-size:9.28px;line-height:14.8px;text-align:center;white-space:nowrap">订单计划</div>
<div class="abs" style="left:350.4px;top:628.9px;font-size:8.5px;letter-spacing:0;line-height:13.1px;color:#555a63;white-space:nowrap">第9月-生产计划<br><span style="letter-spacing:-.15px">2024.9A01</span></div>
<div class="abs" style="left:436.3px;top:628.9px;font-size:8.5px;letter-spacing:0;line-height:13.1px;color:#555a63;white-space:nowrap"><span class="nr">SCJHXSDD240627-</span><br>01-240926-01</div>
<div class="abs" style="left:523.4px;top:628.9px;font-size:8.5px;letter-spacing:0;line-height:13.1px;color:#555a63;white-space:nowrap">2024-09-30</div>
<div class="abs" style="left:597.5px;top:628.9px;font-size:8.5px;letter-spacing:0;line-height:13.1px;color:#555a63;white-space:nowrap">2024-09-30</div>
<div class="abs" style="left:672.2px;top:628.9px;font-size:8.5px;letter-spacing:0;line-height:13.1px;color:#555a63;white-space:nowrap">2025-01-15</div>
<div class="abs" style="left:748px;top:628.9px;font-size:8.5px;letter-spacing:0;line-height:13.1px;color:#555a63;white-space:nowrap">示例：无锡简道<br>云-第1份销售订<br>单</div>
<div class="abs" style="left:828.6px;top:628.9px;font-size:8.5px;letter-spacing:0;line-height:13.1px;color:#555a63;white-space:nowrap">Dell电脑B型-水冷机箱</div>
<div class="abs" style="left:940.4px;top:628.9px;font-size:8.5px;letter-spacing:0;line-height:13.1px;color:#555a63;white-space:nowrap">C0013</div>
<div class="abs" style="left:1006.5px;top:628.9px;font-size:8.5px;letter-spacing:0;line-height:13.1px;color:#555a63;white-space:nowrap">成品</div>
<div class="abs" style="left:1071.3px;top:628.9px;font-size:8.5px;letter-spacing:0;line-height:13.1px;color:#555a63;white-space:nowrap">B29002</div>
<div class="abs" style="left:211.5px;top:677.2px;width:36.3px;height:14.8px;border-radius:2.5px;background:#2fc25b;color:#fff;font-size:9.28px;line-height:14.8px;padding-left:4.6px;white-space:nowrap">已完...</div>
<div class="abs" style="left:274.6px;top:677.2px;width:46.4px;height:14.8px;border-radius:2.5px;background:#13b5d2;color:#fff;font-weight:bold;font-size:9.28px;line-height:14.8px;text-align:center;white-space:nowrap">订单计划</div>
<div class="abs" style="left:350.4px;top:678.1px;font-size:8.5px;letter-spacing:0;line-height:13.1px;color:#555a63;white-space:nowrap">第6月-生产计划<br><span style="letter-spacing:-.15px">2024.6A03</span></div>
<div class="abs" style="left:436.3px;top:678.1px;font-size:8.5px;letter-spacing:0;line-height:13.1px;color:#555a63;white-space:nowrap"><span class="nr">SCJHXSDD240627-</span><br>01-240628-02</div>
<div class="abs" style="left:523.4px;top:678.1px;font-size:8.5px;letter-spacing:0;line-height:13.1px;color:#555a63;white-space:nowrap">2024-06-28</div>
<div class="abs" style="left:597.5px;top:678.1px;font-size:8.5px;letter-spacing:0;line-height:13.1px;color:#555a63;white-space:nowrap">2024-07-20</div>
<div class="abs" style="left:672.2px;top:678.1px;font-size:8.5px;letter-spacing:0;line-height:13.1px;color:#555a63;white-space:nowrap">2025-01-15</div>
<div class="abs" style="left:748px;top:678.1px;font-size:8.5px;letter-spacing:0;line-height:13.1px;color:#555a63;white-space:nowrap">示例：无锡简道<br>云-第1份销售订<br>单</div>
<div class="abs" style="left:828.6px;top:678.1px;font-size:8.5px;letter-spacing:0;line-height:13.1px;color:#555a63;white-space:nowrap">笔记本电脑</div>
<div class="abs" style="left:940.4px;top:678.1px;font-size:8.5px;letter-spacing:0;line-height:13.1px;color:#555a63;white-space:nowrap">C0005</div>
<div class="abs" style="left:1006.5px;top:678.1px;font-size:8.5px;letter-spacing:0;line-height:13.1px;color:#555a63;white-space:nowrap">成品</div>
<div class="abs" style="left:1071.3px;top:678.1px;font-size:8.5px;letter-spacing:0;line-height:13.1px;color:#555a63;white-space:nowrap">戴尔最新版</div>
</body></html>
